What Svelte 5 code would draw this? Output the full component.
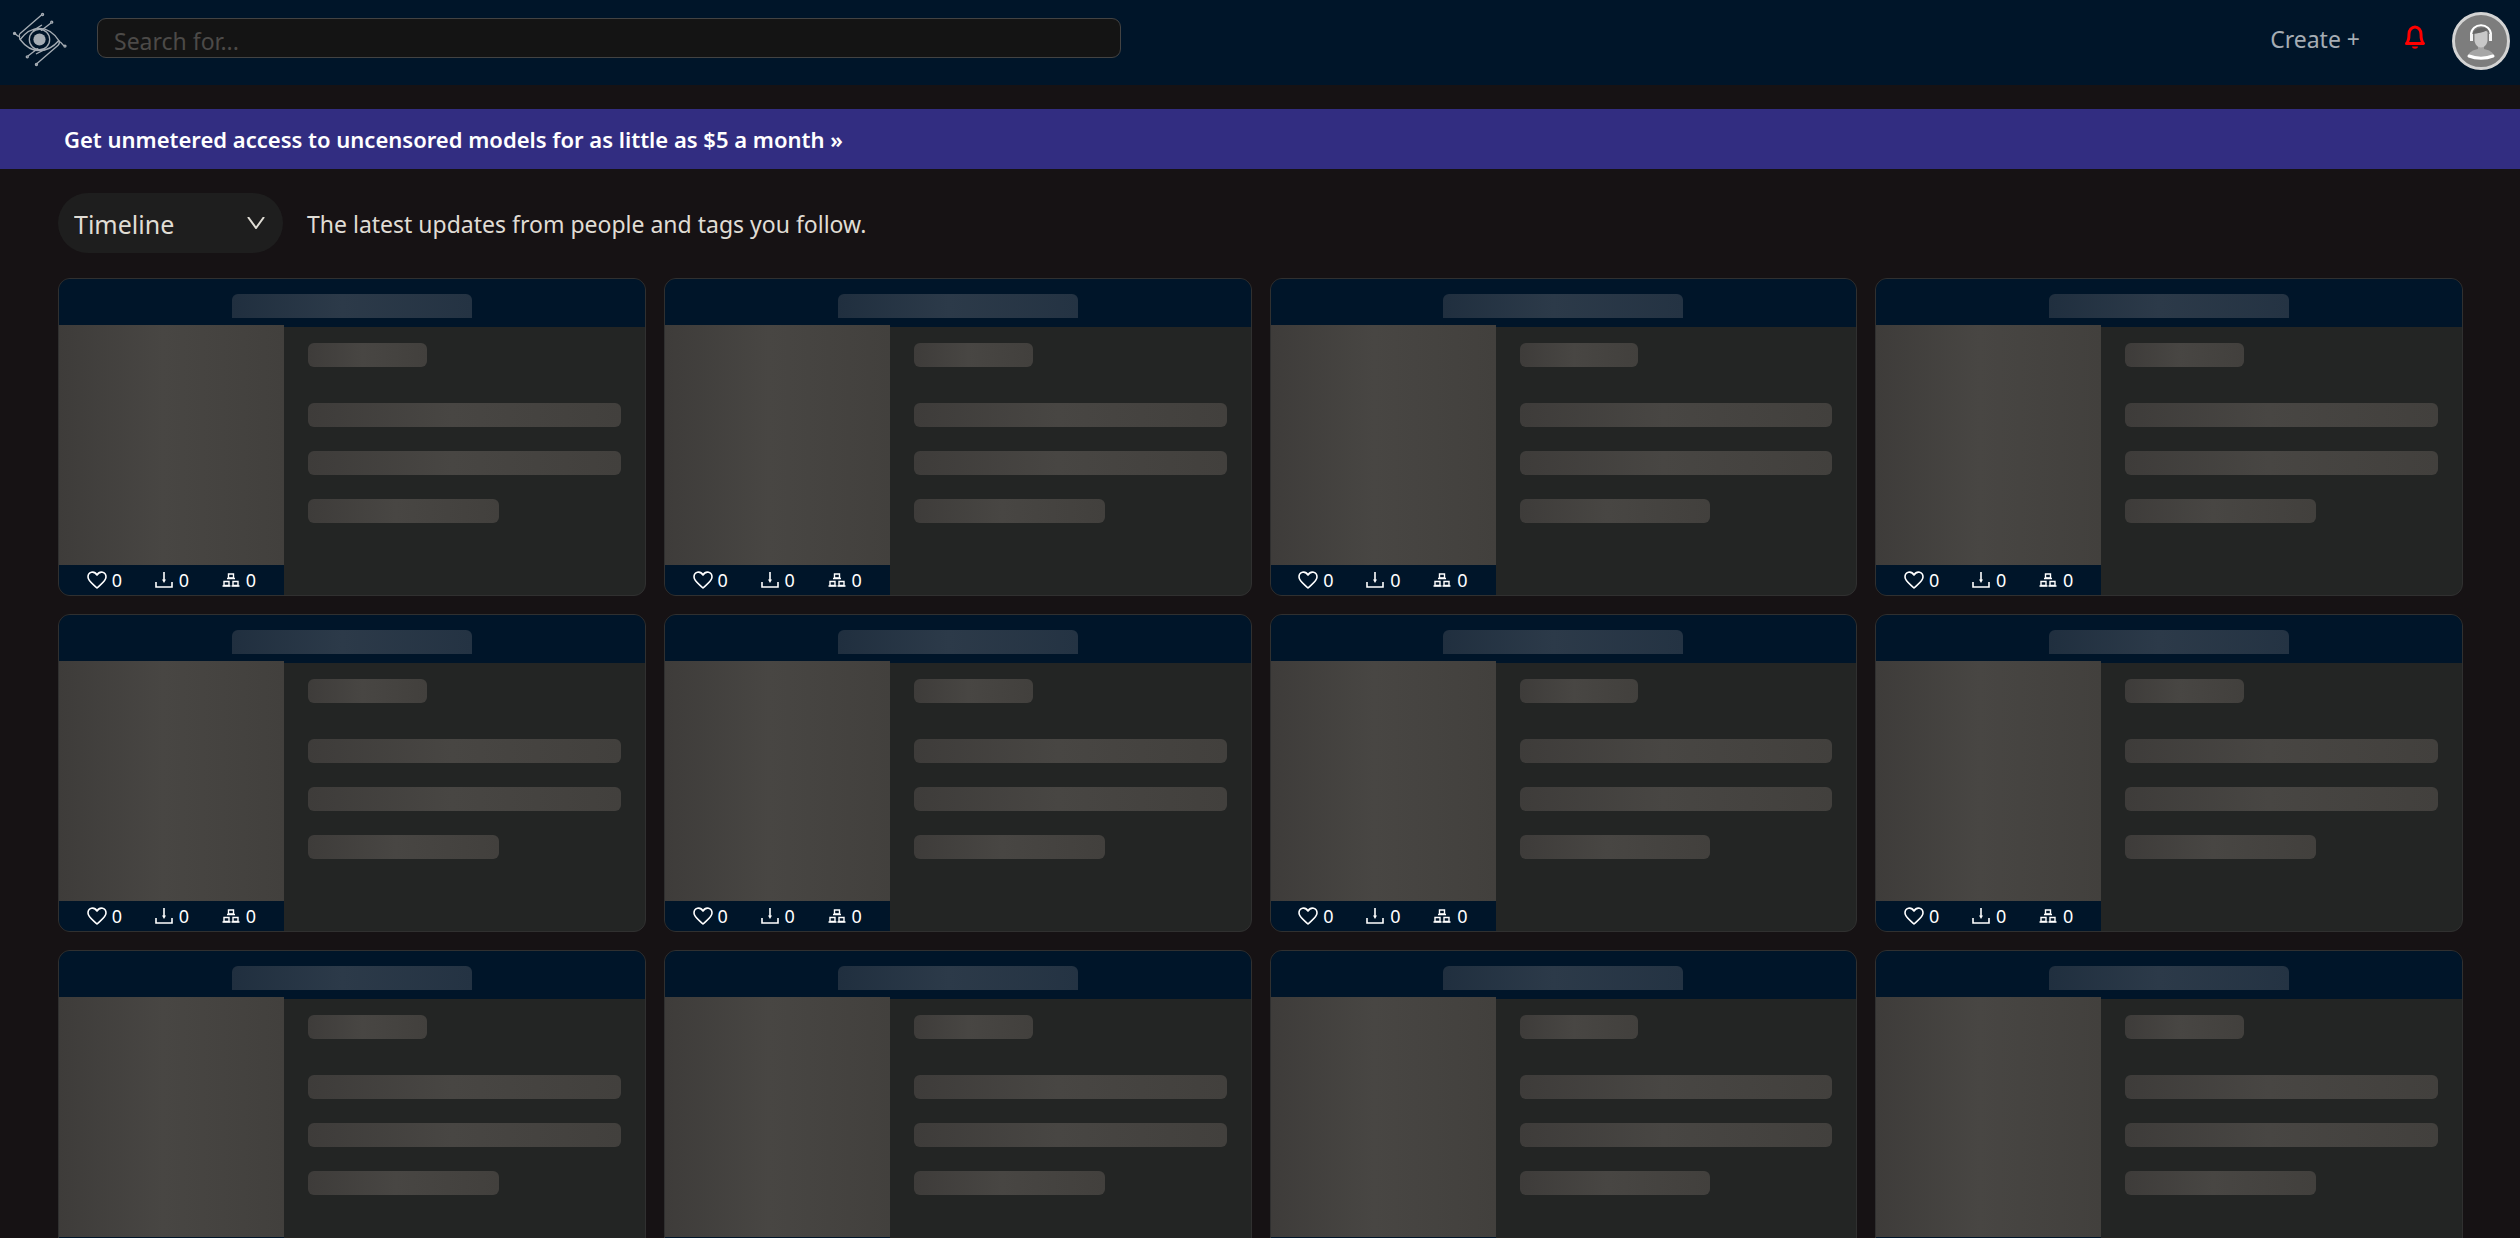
<script lang="ts">
  const cards = Array.from({ length: 12 }, (_, id) => ({ id, likes: 0, downloads: 0, remixes: 0 }));

  let query = $state('');
  let feed = $state('timeline');
</script>

<header class="topbar">
  <a class="logo" href="/" aria-label="Home">
    <svg viewBox="0 0 54 54" fill="none" stroke="currentColor" stroke-width="1.3" stroke-linecap="round" stroke-linejoin="round">
      <path d="M8 27c6-8 13-11 19-11s13 3 19 12c-6 7-13 10-19 10S14 35 8 27z" />
      <circle cx="27" cy="27" r="10" />
      <circle cx="27" cy="27" r="6" fill="currentColor" stroke="none" />
      <path d="M29 3L8 21c-1 1-1 4 0 6M38 11l-9 7M29 13l-8 5M24 51l21-18c2-2 2-3 1-5M16 43l9-7M24 41l8-4" />
      <path d="M2.500 21c1 0 2 3 5 3M51.500 33c-2 0-2-3-5-4" />
      <circle cx="30" cy="2.500" r="1" />
      <circle cx="39" cy="10" r="1" />
      <circle cx="2.500" cy="21" r="1" />
      <circle cx="52" cy="33.500" r="1" />
      <circle cx="15" cy="44" r="1" />
      <circle cx="24" cy="51.500" r="1" />
    </svg>
  </a>
  <input class="search" type="text" placeholder="Search for..." aria-label="Search" bind:value={query} />
  <nav class="actions">
    <a class="create" href="/create">Create +</a>
    <button class="bell" aria-label="Notifications">
      <svg viewBox="0 0 24 26" fill="none" stroke="currentColor" stroke-width="3" stroke-linejoin="round">
        <path d="M3.500 19.500c2-2 2.500-5 2.500-9.500a6 7 0 0 1 12 0c0 4.500.5 7.500 2.500 9.500z" />
        <path d="M9 22.500h6c0 3-6 3-6 0z" fill="currentColor" stroke="none" />
      </svg>
    </button>
    <button class="avatar" aria-label="Account">
      <svg viewBox="0 0 58 58">
        <circle cx="29" cy="29" r="27.500" fill="#7d7d7d" stroke="#d4d4d4" stroke-width="3" />
        <path d="M16 44c1-4 5-6 10-7v-4h6v4c5 1 9 3 10 7-7 3-19 3-26 0z" fill="#a6a6a6" />
        <path d="M22.500 20c3-3 10-3 13 0v8c0 4-3 7.500-6.500 7.500s-6.500-3.500-6.500-7.500z" fill="#c8c8c8" />
        <path d="M20.500 22c2-7 13-8 16-4v3l-1-3c-5 3-9 3-15 4z" fill="#666" />
        <path d="M19 23c0-13 20-13 20 0" fill="none" stroke="#fff" stroke-width="2" />
        <path d="M19.500 22v7M38.500 22v7" stroke="#f4f4f4" stroke-width="3" />
        <path d="M17 44c7 3 17 3 24 0" fill="none" stroke="#fff" stroke-width="3" stroke-linecap="round" />
      </svg>
    </button>
  </nav>
</header>

<a class="promo" href="/plans">Get unmetered access to uncensored models for as little as $5 a month »</a>

<main>
  <div class="feed-bar">
    <div class="feed-select">
      <select aria-label="Feed" bind:value={feed}>
        <option value="timeline">Timeline</option>
        <option value="trending">Trending</option>
      </select>
      <svg viewBox="0 0 18 12" fill="none" stroke="currentColor" stroke-width="2">
        <path d="M1 0l8 11 8-11" />
      </svg>
    </div>
    <p>The latest updates from people and tags you follow.</p>
  </div>

  <div class="grid">
    {#each cards as card (card.id)}
      <article class="card">
        <div class="card-title">
          <span class="bone"></span>
        </div>
        <div class="card-body">
          <div class="media">
            <div class="bone cover"></div>
            <div class="stats">
              <span>
                <svg viewBox="0 0 20 18" fill="none" stroke="currentColor" stroke-width="1.600" stroke-linejoin="round">
                  <path d="M10 17C6 13 1 10 1 6c0-5 6-7 9-2 3-5 9-3 9 2 0 4-5 7-9 11z" />
                </svg>
                {card.likes}
              </span>
              <span>
                <svg viewBox="0 0 20 18" fill="none" stroke="currentColor" stroke-width="1.600">
                  <path d="M2 11v5h16v-5" />
                  <path d="M10 1v9" />
                  <path d="M8 8.500h4L10 12z" fill="currentColor" stroke="none" />
                </svg>
                {card.downloads}
              </span>
              <span>
                <svg viewBox="0 0 20 18" fill="none" stroke="currentColor" stroke-width="1.400">
                  <path d="M7.500 3h5v4h-5zM3 10.500h5v4H3zM12 10.500h5v4h-5z" />
                  <path d="M6 7.500h8M1.500 15h8M10.500 15h8" />
                </svg>
                {card.remixes}
              </span>
            </div>
          </div>
          <div class="lines">
            <div class="bone heading"></div>
            <div class="bone"></div>
            <div class="bone"></div>
            <div class="bone last"></div>
          </div>
        </div>
      </article>
    {/each}
  </div>
</main>

<style>
  :global(body) {
    background: #161214;
    color: #e0ddd5;
    font-family: 'Segoe UI', 'Noto Sans', sans-serif;
    font-size: 23px;
  }

  button,
  input,
  select {
    font: inherit;
  }

  .topbar {
    display: flex;
    align-items: flex-start;
    height: 85px;
    padding: 12px 10px 0 12px;
    box-sizing: border-box;
    background: #001529;
  }

  .logo {
    color: #a6adb4;
    margin-right: 30px;
  }

  .logo svg {
    display: block;
    width: 55px;
    height: 55px;
  }

  .search {
    width: 1024px;
    max-width: 50%;
    height: 40px;
    margin-top: 6px;
    padding: 6px 16px 0;
    box-sizing: border-box;
    background: #141414;
    border: 1px solid #434343;
    border-radius: 9px;
    color: #e0ddd5;
    outline: none;
  }

  .search::placeholder {
    color: #4c4a48;
    opacity: 1;
  }

  .actions {
    display: flex;
    align-items: flex-start;
    margin-left: auto;
  }

  .create {
    margin-top: 12px;
    color: #a6adb4;
    line-height: 30px;
    text-decoration: none;
  }

  .bell,
  .avatar {
    padding: 0;
    background: none;
    border: none;
    cursor: pointer;
  }

  .bell {
    margin: 12px 25px 0 43px;
    color: #ff0000;
  }

  .bell svg {
    display: block;
    width: 24px;
    height: 26px;
  }

  .avatar svg {
    display: block;
    width: 58px;
    height: 58px;
  }

  .promo {
    display: block;
    margin-top: 24px;
    padding: 1px 64px 0;
    background: #322d81;
    color: #fff;
    font-size: 22px;
    font-weight: 600;
    line-height: 59px;
    text-decoration: none;
  }

  main {
    padding: 24px 57px 24px 58px;
  }

  .feed-bar {
    display: flex;
    align-items: center;
    gap: 24px;
    margin-bottom: 25px;
  }

  .feed-bar p {
    margin: 2px 0 0;
  }

  .feed-select {
    display: grid;
    align-items: center;
    width: 225px;
  }

  .feed-select select,
  .feed-select svg {
    grid-area: 1 / 1;
  }

  .feed-select select {
    height: 60px;
    padding: 1px 16px 0;
    appearance: none;
    background: #1e1e1e;
    border: none;
    border-radius: 30px;
    color: inherit;
    font-size: 25px;
  }

  .feed-select svg {
    justify-self: end;
    width: 18px;
    height: 12px;
    margin-right: 18px;
    pointer-events: none;
  }

  .grid {
    display: grid;
    grid-template-columns: repeat(4, 1fr);
    gap: 18px;
  }

  .card {
    background: #232524;
    border: 1px solid #303030;
    border-radius: 12px;
    overflow: hidden;
  }

  .bone {
    height: 24px;
    border-radius: 6px;
    background: linear-gradient(90deg, #3e3c3a, #484643 46%, #42403d);
  }

  .card-title {
    display: flex;
    align-items: flex-end;
    justify-content: center;
    height: 48px;
    padding-bottom: 9px;
    box-sizing: border-box;
    background: #001529;
  }

  .card-title .bone {
    width: 240px;
    border-radius: 6px 6px 0 0;
    background: linear-gradient(90deg, #202f3f, #2c3a49 46%, #243343);
  }

  .card-body {
    display: flex;
  }

  .media {
    flex: none;
    width: 225px;
    margin-top: -2px;
  }

  .cover {
    height: 240px;
    border-radius: 0;
  }

  .stats {
    display: flex;
    justify-content: space-around;
    align-items: center;
    height: 30px;
    padding: 0 12px;
    background: #001529;
    color: #fff;
    font-size: 18px;
  }

  .stats span {
    display: flex;
    align-items: center;
    gap: 5px;
  }

  .stats svg {
    width: 20px;
    height: 18px;
  }

  .lines {
    flex: 1;
    display: grid;
    align-content: start;
    gap: 24px;
    padding: 16px 24px;
  }

  .heading {
    width: 38%;
    margin-bottom: 12px;
  }

  .last {
    width: 61%;
  }
</style>
